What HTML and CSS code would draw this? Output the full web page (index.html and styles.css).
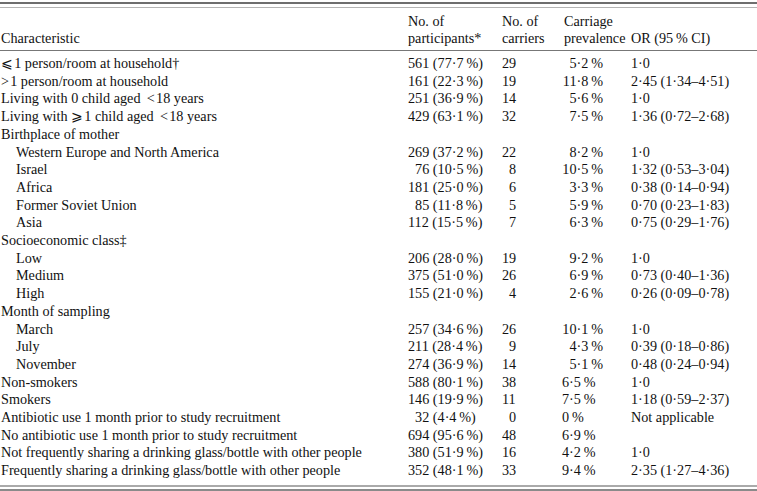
FILE: index.html
```html
<!DOCTYPE html>
<html lang="en">
<head>
<meta charset="utf-8">
<title>Carriage table</title>
<link rel="stylesheet" href="styles.css">
</head>
<body>
<div class="page">
  <div class="rule-top"></div>
  <table class="tbl">
    <colgroup>
      <col class="c1"><col class="c2"><col class="c3"><col class="c4"><col class="c5">
    </colgroup>
    <thead>
      <tr>
        <th class="h1">Characteristic</th>
        <th class="h2">No. of<br>participants*</th>
        <th class="h3">No. of<br>carriers</th>
        <th class="h4">Carriage<br>prevalence</th>
        <th class="h5">OR (95&#8201;% CI)</th>
      </tr>
    </thead>
    <tbody>
      <tr class="first"><td>&#10877;&#8202;1 person/room at household†</td><td>561 (77·7&#8201;%)</td><td>29</td><td class="pr">5·2&#8201;%</td><td>1·0</td></tr>
      <tr><td>&gt;&#8202;1 person/room at household</td><td>161 (22·3&#8201;%)</td><td>19</td><td class="pr">11·8&#8201;%</td><td>2·45 (1·34–4·51)</td></tr>
      <tr><td>Living with 0 child aged &#8201;&lt;&#8202;18 years</td><td>251 (36·9&#8201;%)</td><td>14</td><td class="pr">5·6&#8201;%</td><td>1·0</td></tr>
      <tr><td>Living with &#10878;&#8202;1 child aged &#8201;&lt;&#8202;18 years</td><td>429 (63·1&#8201;%)</td><td>32</td><td class="pr">7·5&#8201;%</td><td>1·36 (0·72–2·68)</td></tr>
      <tr><td>Birthplace of mother</td><td></td><td></td><td></td><td></td></tr>
      <tr><td class="sub">Western Europe and North America</td><td>269 (37·2&#8201;%)</td><td>22</td><td class="pr">8·2&#8201;%</td><td>1·0</td></tr>
      <tr><td class="sub">Israel</td><td>&#8199;76 (10·5&#8201;%)</td><td>&#8199;8</td><td class="pr">10·5&#8201;%</td><td>1·32 (0·53–3·04)</td></tr>
      <tr><td class="sub">Africa</td><td>181 (25·0&#8201;%)</td><td>&#8199;6</td><td class="pr">3·3&#8201;%</td><td>0·38 (0·14–0·94)</td></tr>
      <tr><td class="sub">Former Soviet Union</td><td>&#8199;85 (11·8&#8201;%)</td><td>&#8199;5</td><td class="pr">5·9&#8201;%</td><td>0·70 (0·23–1·83)</td></tr>
      <tr><td class="sub">Asia</td><td>112 (15·5&#8201;%)</td><td>&#8199;7</td><td class="pr">6·3&#8201;%</td><td>0·75 (0·29–1·76)</td></tr>
      <tr><td>Socioeconomic class‡</td><td></td><td></td><td></td><td></td></tr>
      <tr><td class="sub">Low</td><td>206 (28·0&#8201;%)</td><td>19</td><td class="pr">9·2&#8201;%</td><td>1·0</td></tr>
      <tr><td class="sub">Medium</td><td>375 (51·0&#8201;%)</td><td>26</td><td class="pr">6·9&#8201;%</td><td>0·73 (0·40–1·36)</td></tr>
      <tr><td class="sub">High</td><td>155 (21·0&#8201;%)</td><td>&#8199;4</td><td class="pr">2·6&#8201;%</td><td>0·26 (0·09–0·78)</td></tr>
      <tr><td>Month of sampling</td><td></td><td></td><td></td><td></td></tr>
      <tr><td class="sub">March</td><td>257 (34·6&#8201;%)</td><td>26</td><td class="pr">10·1&#8201;%</td><td>1·0</td></tr>
      <tr><td class="sub">July</td><td>211 (28·4&#8201;%)</td><td>&#8199;9</td><td class="pr">4·3&#8201;%</td><td>0·39 (0·18–0·86)</td></tr>
      <tr><td class="sub">November</td><td>274 (36·9&#8201;%)</td><td>14</td><td class="pr">5·1&#8201;%</td><td>0·48 (0·24–0·94)</td></tr>
      <tr><td>Non-smokers</td><td>588 (80·1&#8201;%)</td><td>38</td><td class="pl">6·5&#8201;%</td><td>1·0</td></tr>
      <tr><td>Smokers</td><td>146 (19·9&#8201;%)</td><td>11</td><td class="pl">7·5&#8201;%</td><td>1·18 (0·59–2·37)</td></tr>
      <tr><td>Antibiotic use 1 month prior to study recruitment</td><td>&#8199;32 (4·4&#8201;%)</td><td>&#8199;0</td><td class="pl">0&#8201;%</td><td>Not applicable</td></tr>
      <tr><td>No antibiotic use 1 month prior to study recruitment</td><td>694 (95·6&#8201;%)</td><td>48</td><td class="pl">6·9&#8201;%</td><td></td></tr>
      <tr><td>Not frequently sharing a drinking glass/bottle with other people</td><td>380 (51·9&#8201;%)</td><td>16</td><td class="pl">4·2&#8201;%</td><td>1·0</td></tr>
      <tr class="last"><td>Frequently sharing a drinking glass/bottle with other people</td><td>352 (48·1&#8201;%)</td><td>33</td><td class="pl">9·4&#8201;%</td><td>2·35 (1·27–4·36)</td></tr>
    </tbody>
  </table>
  <div class="rule-bottom"></div>
</div>
</body>
</html>
```
FILE: styles.css
```css
html, body {
  margin: 0;
  padding: 0;
  background: #ffffff;
}
.page {
  width: 757px;
  font-family: "Liberation Serif", "DejaVu Serif", serif;
  font-size: 14.2px;
  color: #111111;
  padding-top: 2px;
}
.rule-top {
  height: 3px;
  border-top: 2px solid #6e6e6e;
  border-bottom: 1px solid #b4b4b4;
}
.rule-bottom {
  margin-top: 5px;
  height: 2px;
  border-top: 2px solid #aaaaaa;
  border-bottom: 2px solid #8a8a8a;
}
.tbl {
  width: 757px;
  border-collapse: collapse;
  table-layout: fixed;
}
.c1 { width: 407px; }
.c2 { width: 94px; }
.c3 { width: 60px; }
.c4 { width: 69px; }
.c5 { width: 127px; }
.tbl th {
  font-weight: normal;
  text-align: left;
  vertical-align: bottom;
  line-height: 17px;
  padding: 5px 0 3px 1px;
  white-space: nowrap;
  border-bottom: 1px solid #777777;
}
.tbl th.h4 { padding-left: 3px; }
.tbl td {
  line-height: 17.7px;
  padding: 0 0 0 1px;
  white-space: nowrap;
  vertical-align: top;
}
.tbl tr.first td { padding-top: 4px; }
.tbl td.sub { padding-left: 16px; }
.tbl td.pr {
  text-align: right;
  padding-right: 27px;
}
.tbl td.pl {
  text-align: left;
  padding-left: 1px;
}
```
